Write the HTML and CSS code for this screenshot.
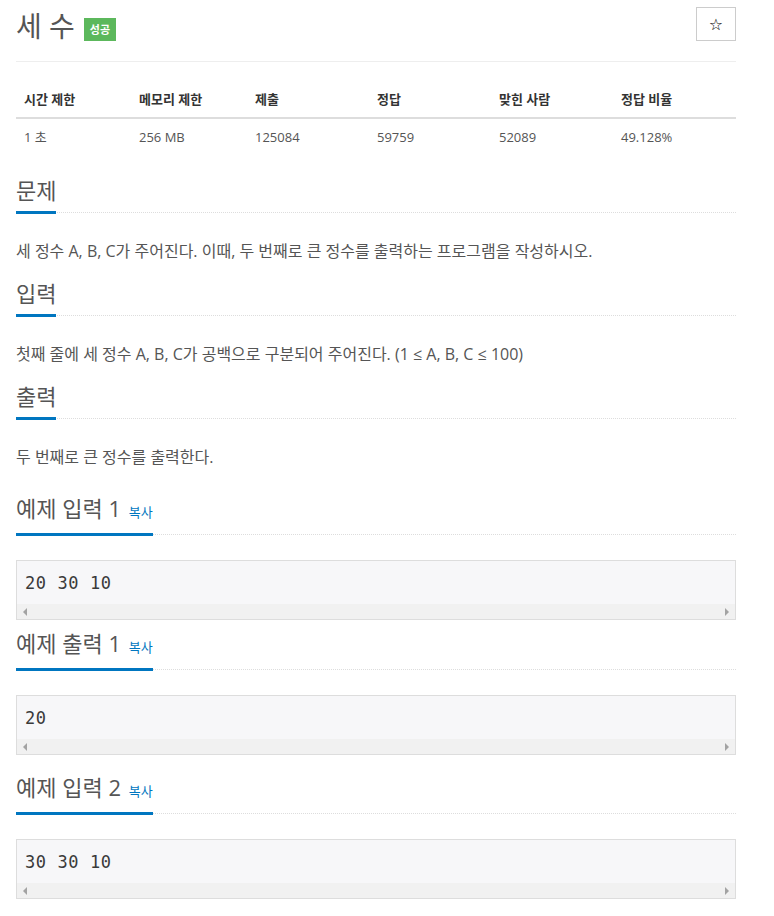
FILE: index.html
```html
<!DOCTYPE html>
<html lang="ko">
<head>
<meta charset="utf-8">
<title>세 수</title>
<link rel="stylesheet" href="styles.css">
</head>
<body>
<div class="page">
  <div class="title-row">
    <h1 class="title">세 수 <span class="badge">성공</span></h1>
    <button class="star-btn" type="button">☆</button>
  </div>
  <hr class="rule">
  <table class="info">
    <thead>
      <tr>
        <th class="c1">시간 제한</th>
        <th class="c2">메모리 제한</th>
        <th class="c3">제출</th>
        <th class="c4">정답</th>
        <th class="c5">맞힌 사람</th>
        <th class="c6">정답 비율</th>
      </tr>
    </thead>
    <tbody>
      <tr>
        <td>1 초</td>
        <td>256 MB</td>
        <td>125084</td>
        <td>59759</td>
        <td>52089</td>
        <td>49.128%</td>
      </tr>
    </tbody>
  </table>

  <section class="sec">
    <div class="headline"><h2>문제</h2></div>
    <p class="text">세 정수 A, B, C가 주어진다. 이때, 두 번째로 큰 정수를 출력하는 프로그램을 작성하시오.</p>
  </section>
  <section class="sec">
    <div class="headline"><h2>입력</h2></div>
    <p class="text">첫째 줄에 세 정수 A, B, C가 공백으로 구분되어 주어진다. (1 ≤ A, B, C ≤ 100)</p>
  </section>
  <section class="sec">
    <div class="headline"><h2>출력</h2></div>
    <p class="text">두 번째로 큰 정수를 출력한다.</p>
  </section>

  <div class="samples first">
    <section class="sample">
      <div class="headline"><h2>예제 입력 1 <a class="copy">복사</a></h2></div>
      <div class="pre">
        <div class="code">20 30 10</div>
        <div class="hscroll"><span class="arr left"></span><span class="arr right"></span></div>
      </div>
    </section>
    <section class="sample">
      <div class="headline"><h2>예제 출력 1 <a class="copy">복사</a></h2></div>
      <div class="pre">
        <div class="code">20</div>
        <div class="hscroll"><span class="arr left"></span><span class="arr right"></span></div>
      </div>
    </section>
  </div>
  <div class="samples">
    <section class="sample">
      <div class="headline"><h2>예제 입력 2 <a class="copy">복사</a></h2></div>
      <div class="pre">
        <div class="code">30 30 10</div>
        <div class="hscroll"><span class="arr left"></span><span class="arr right"></span></div>
      </div>
    </section>
  </div>
</div>
</body>
</html>
```
FILE: styles.css
```css
html, body {
  margin: 0;
  padding: 0;
  background: #fff;
}
body {
  font-family: "Open Sans", "Noto Sans CJK KR", sans-serif;
  color: #555;
  font-size: 14px;
}
.page {
  width: 720px;
  margin-left: 16px;
}
.title-row {
  display: flex;
  justify-content: space-between;
  align-items: flex-start;
  padding-top: 7px;
}
.title {
  margin: 0;
  margin-top: 1px;
  font-size: 28px;
  font-weight: 400;
  line-height: 36px;
  color: #555;
  display: flex;
  align-items: center;
  gap: 9px;
}
.badge {
  display: inline-block;
  background: #5cb85c;
  color: #fff;
  font-size: 11px;
  font-weight: 700;
  line-height: 23px;
  padding: 0 6px;
  margin-top: 6px;
}
.star-btn {
  width: 40px;
  height: 34px;
  border: 1px solid #ccc;
  background: #fff;
  font-size: 16px;
  color: #000;
  padding: 0;
  font-family: "DejaVu Sans", sans-serif;
}
.rule {
  border: 0;
  border-top: 1px solid #eee;
  margin: 17px 0 19px 0;
}
.info {
  width: 720px;
  border-collapse: collapse;
  font-size: 13px;
  table-layout: fixed;
}
.info th, .info td {
  text-align: left;
  padding: 8px;
  line-height: 20px;
}
.info th {
  font-weight: 700;
  color: #333;
  border-bottom: 2px solid #ddd;
}
.info td {
  color: #555;
}
.c1 { width: 99px; }
.c2 { width: 100px; }
.c3 { width: 106px; }
.c4 { width: 106px; }
.c5 { width: 106px; }
.c6 { width: 107px; }

.sec {
  margin-top: 20px;
}
.sec + .sec {
  margin-top: 15px;
}
.headline {
  border-bottom: 1px dotted #ddd;
  line-height: 0;
}
.headline h2 {
  display: inline-block;
  margin: 0 0 -2px 0;
  font-size: 22px;
  font-weight: 400;
  line-height: 30px;
  padding-bottom: 6px;
  border-bottom: 3px solid #0076c0;
  color: #555;
}
.copy {
  font-size: 13px;
  color: #0076c0;
  margin-left: 2px;
}
.text {
  margin: 26px 0 0 0;
  font-size: 16px;
  line-height: 24px;
  color: #555;
}
.samples.first {
  margin-top: 24px;
}
.samples {
  margin-top: 17px;
}
.sample + .sample {
  margin-top: 8px;
}
.pre {
  margin-top: 25px;
  border: 1px solid #ddd;
  background: #f7f7f9;
}
.code {
  font-family: "DejaVu Sans Mono", monospace;
  font-size: 17px;
  letter-spacing: 0.6px;
  line-height: 20px;
  padding: 12px 8px 11px 8px;
  color: #3a3a3a;
}
.hscroll {
  height: 15px;
  background: #f1f1f1;
  display: flex;
  justify-content: space-between;
  align-items: center;
  padding: 0 6px;
}
.arr {
  width: 0;
  height: 0;
  border-top: 4px solid transparent;
  border-bottom: 4px solid transparent;
}
.arr.left { border-right: 4px solid #a3a3a3; }
.arr.right { border-left: 4px solid #a3a3a3; }
```
